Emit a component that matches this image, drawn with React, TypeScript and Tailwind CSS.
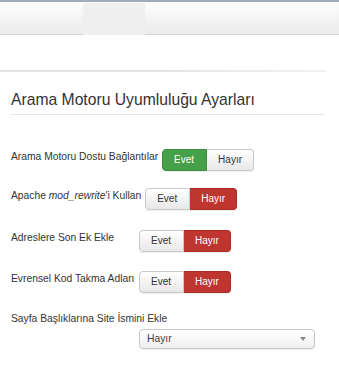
import React from "react"

const font = { fontFamily: '"Liberation Sans", Arial, sans-serif' }

function Toggle({ on }: { on: "yes" | "no" }) {
  const base = "h-[22px] flex items-center px-[11px] text-[10px] leading-none border"
  const off = "bg-gradient-to-b from-[#ffffff] to-[#e8e8e8] border-[#c9c9c9] text-[#333]"
  return (
    <div className="flex shrink-0 shadow-[0_1px_1px_rgba(0,0,0,0.06)]">
      <div
        className={`${base} pr-[12px] rounded-l-[4px] ${
          on === "yes" ? "bg-[#45a049] border-[#3c8f40] text-white" : off
        }`}
      >
        Evet
      </div>
      <div
        className={`${base} border-l-0 rounded-r-[4px] ${
          on === "no" ? "bg-[#bf3530] border-[#a82d28] text-white" : off
        }`}
      >
        Hayır
      </div>
    </div>
  )
}

function Row({ label, on, mt }: { label: React.ReactNode; on: "yes" | "no"; mt: string }) {
  return (
    <div className={`flex items-start gap-[4px] pl-[11px] ${mt}`}>
      <div className="min-w-[124px] text-[10.3px] leading-[14px] pt-[1px] text-[#333] whitespace-nowrap">
        {label}
      </div>
      <Toggle on={on} />
    </div>
  )
}

export default function App() {
  return (
    <div className="w-[339px] h-[369px] bg-white overflow-hidden" style={font}>
      <div className="h-[2px] bg-[#a1abb9]" />
      <div className="h-[33px] flex items-end bg-gradient-to-b from-[#fdfdfd] to-[#ebebeb] border-b border-[#d6d6d6]">
        <div className="ml-[83px] w-[62px] h-[32px] mb-[-1px] bg-[#efefef] rounded-t-[3px]" />
      </div>

      <div className="mt-[35px] h-[2px] w-[326px] bg-gradient-to-r from-[#e4e4e4] via-[#e4e4e4] to-[#f2f2f2]" />

      <div className="mt-[18px] ml-[10px] w-[314px] pb-[4px] border-b border-[#e6e6e6]">
        <h1 className="text-[15.7px] leading-[20px] text-[#333] pl-[1px]">
          Arama Motoru Uyumluluğu Ayarları
        </h1>
      </div>

      <Row mt="mt-[34px]" label="Arama Motoru Dostu Bağlantılar" on="yes" />
      <Row
        mt="mt-[17px]"
        label={
          <>
            Apache <i>mod_rewrite</i>'i Kullan
          </>
        }
        on="no"
      />
      <Row mt="mt-[20px]" label="Adreslere Son Ek Ekle" on="no" />
      <Row mt="mt-[19px]" label="Evrensel Kod Takma Adları" on="no" />

      <div className="mt-[19px] pl-[11px] text-[10.3px] leading-[14px] text-[#333]">
        Sayfa Başlıklarına Site İsmini Ekle
      </div>
      <div className="mt-[3px] ml-[139px] w-[176px] h-[20px] flex items-center justify-between pl-[7px] pr-[8px] rounded-[4px] border border-[#c6c6c6] bg-gradient-to-b from-[#ffffff] to-[#efefef] shadow-[0_1px_1px_rgba(0,0,0,0.06)]">
        <span className="text-[10.3px] text-[#444]">Hayır</span>
        <svg width="6" height="4" viewBox="0 0 6 4">
          <path d="M0 0 H6 L3 4 Z" fill="#888" />
        </svg>
      </div>
    </div>
  )
}
